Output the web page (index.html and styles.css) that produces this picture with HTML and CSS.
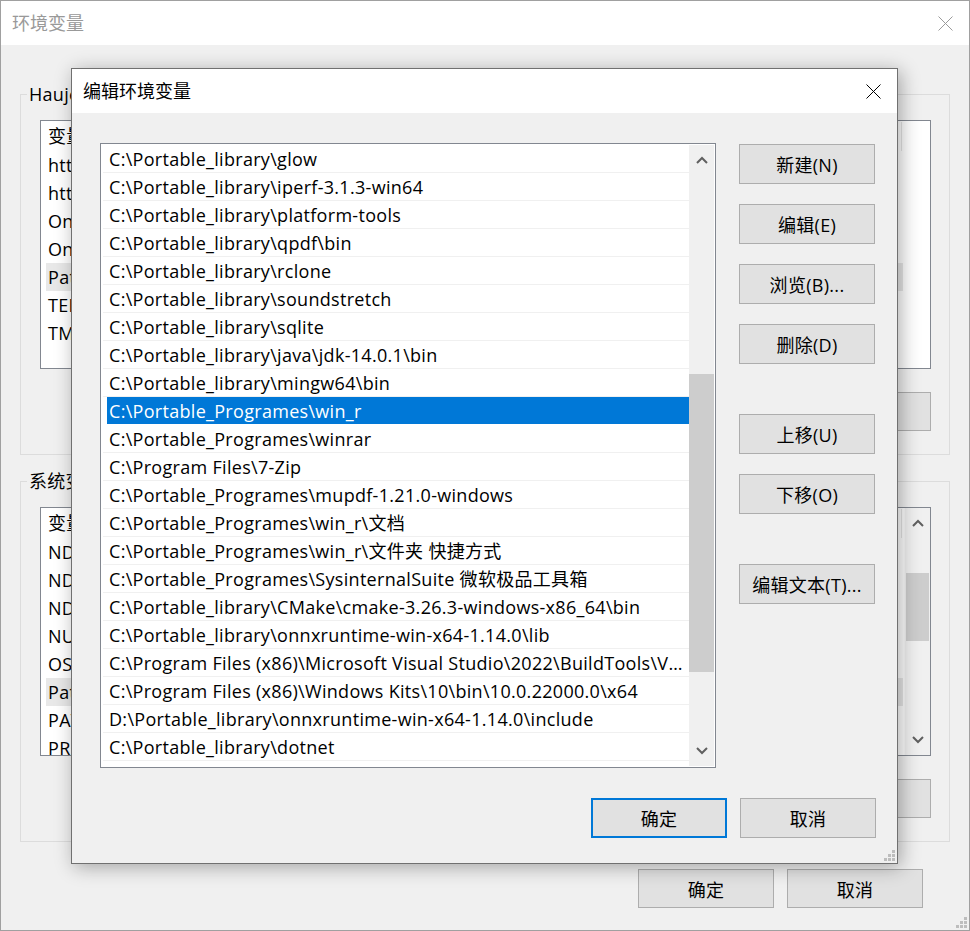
FILE: index.html
```html
<!DOCTYPE html>
<html lang="zh-CN">
<head>
    <meta charset="UTF-8">
    <title>环境变量</title>
    <link rel="stylesheet" href="styles.css">
</head>
<body>
    <div class="window">
        <div class="titlebar">
            <span class="title inactive">环境变量</span>
            <svg class="close-icon" width="15" height="15" viewBox="0 0 15 15"><path d="M0.5 0.5L14.5 14.5M14.5 0.5L0.5 14.5" stroke="#9a9a9a" stroke-width="1" fill="none"/></svg>
        </div>
        <div class="window-body">
            <fieldset class="group first">
                <legend>Haujet 的用户变量(U)</legend>
                <div class="listview">
                    <div class="lv-header">
                        <div class="lv-col name">变量</div>
                        <div class="lv-col value">值</div>
                    </div>
                    <div class="lv-row"><span class="name">http_proxy</span><span class="value">http://127.0.0.1:7890</span></div>
                    <div class="lv-row"><span class="name">https_proxy</span><span class="value">http://127.0.0.1:7890</span></div>
                    <div class="lv-row"><span class="name">OneDrive</span><span class="value">C:\Users\Haujet\OneDrive</span></div>
                    <div class="lv-row"><span class="name">OneDriveConsumer</span><span class="value">C:\Users\Haujet\OneDrive</span></div>
                    <div class="lv-row sel"><span class="name">Path</span><span class="value">C:\Portable_library\glow;C:\Portable_library\iperf-3.1.3-win64</span></div>
                    <div class="lv-row"><span class="name">TEMP</span><span class="value">%USERPROFILE%\AppData\Local\Temp</span></div>
                    <div class="lv-row"><span class="name">TMP</span><span class="value">%USERPROFILE%\AppData\Local\Temp</span></div>
                </div>
                <div class="group-buttons">
                    <button class="btn">新建(N)...</button>
                    <button class="btn">编辑(E)...</button>
                    <button class="btn">删除(D)</button>
                </div>
            </fieldset>

            <fieldset class="group second">
                <legend>系统变量(S)</legend>
                <div class="listview with-scroll">
                    <div class="lv-content">
                        <div class="lv-header">
                            <div class="lv-col name">变量</div>
                            <div class="lv-col value">值</div>
                        </div>
                        <div class="lv-row"><span class="name">NDK_HOME</span><span class="value">C:\Android\ndk</span></div>
                        <div class="lv-row"><span class="name">NDK_ROOT</span><span class="value">C:\Android\ndk</span></div>
                        <div class="lv-row"><span class="name">NDK_TOOLCHAIN</span><span class="value">C:\Android\ndk\toolchains</span></div>
                        <div class="lv-row"><span class="name">NUMBER_OF_PROCESSORS</span><span class="value">16</span></div>
                        <div class="lv-row"><span class="name">OS</span><span class="value">Windows_NT</span></div>
                        <div class="lv-row sel"><span class="name">Path</span><span class="value">C:\Windows\system32;C:\Windows</span></div>
                        <div class="lv-row"><span class="name">PATHEXT</span><span class="value">.COM;.EXE;.BAT;.CMD;.VBS;.VBE;.JS</span></div>
                        <div class="lv-row"><span class="name">PROCESSOR_ARCHITECTURE</span><span class="value">AMD64</span></div>
                    </div>
                    <div class="scrollbar small">
                        <div class="sb-btn"><svg width="12" height="8" viewBox="0 0 12 8"><polyline points="1,7 6,2 11,7" fill="none" stroke="#606060" stroke-width="2"/></svg></div>
                        <div class="sb-track"><div class="sb-thumb"></div></div>
                        <div class="sb-btn"><svg width="12" height="8" viewBox="0 0 12 8"><polyline points="1,1 6,6 11,1" fill="none" stroke="#606060" stroke-width="2"/></svg></div>
                    </div>
                </div>
                <div class="group-buttons">
                    <button class="btn">新建(W)...</button>
                    <button class="btn">编辑(I)...</button>
                    <button class="btn">删除(L)</button>
                </div>
            </fieldset>

            <div class="window-footer">
                <button class="btn">确定</button>
                <button class="btn">取消</button>
            </div>
        </div>
        <svg class="grip" width="12" height="12" viewBox="0 0 12 12"><g fill="#bdbdbd"><rect x="9" y="1" width="3" height="3"/><rect x="5" y="5" width="3" height="3"/><rect x="9" y="5" width="3" height="3"/><rect x="1" y="9" width="3" height="3"/><rect x="5" y="9" width="3" height="3"/><rect x="9" y="9" width="3" height="3"/></g></svg>
    </div>

    <div class="dialog">
        <div class="titlebar">
            <span class="title">编辑环境变量</span>
            <svg class="close-icon" width="15" height="15" viewBox="0 0 15 15"><path d="M0.5 0.5L14.5 14.5M14.5 0.5L0.5 14.5" stroke="#000" stroke-width="1" fill="none"/></svg>
        </div>
        <div class="dialog-body">
            <div class="dialog-main">
                <div class="pathlist">
                    <div class="pl-rows">
                        <div class="pl-row">C:\Portable_library\glow</div>
                        <div class="pl-row">C:\Portable_library\iperf-3.1.3-win64</div>
                        <div class="pl-row">C:\Portable_library\platform-tools</div>
                        <div class="pl-row">C:\Portable_library\qpdf\bin</div>
                        <div class="pl-row">C:\Portable_library\rclone</div>
                        <div class="pl-row">C:\Portable_library\soundstretch</div>
                        <div class="pl-row">C:\Portable_library\sqlite</div>
                        <div class="pl-row">C:\Portable_library\java\jdk-14.0.1\bin</div>
                        <div class="pl-row">C:\Portable_library\mingw64\bin</div>
                        <div class="pl-row sel">C:\Portable_Programes\win_r</div>
                        <div class="pl-row">C:\Portable_Programes\winrar</div>
                        <div class="pl-row">C:\Program Files\7-Zip</div>
                        <div class="pl-row">C:\Portable_Programes\mupdf-1.21.0-windows</div>
                        <div class="pl-row">C:\Portable_Programes\win_r\文档</div>
                        <div class="pl-row">C:\Portable_Programes\win_r\文件夹 快捷方式</div>
                        <div class="pl-row">C:\Portable_Programes\SysinternalSuite 微软极品工具箱</div>
                        <div class="pl-row">C:\Portable_library\CMake\cmake-3.26.3-windows-x86_64\bin</div>
                        <div class="pl-row">C:\Portable_library\onnxruntime-win-x64-1.14.0\lib</div>
                        <div class="pl-row">C:\Program Files (x86)\Microsoft Visual Studio\2022\BuildTools\VC\Tools\MSVC\14.35.32215\bin\Hostx64\x64</div>
                        <div class="pl-row">C:\Program Files (x86)\Windows Kits\10\bin\10.0.22000.0\x64</div>
                        <div class="pl-row">D:\Portable_library\onnxruntime-win-x64-1.14.0\include</div>
                        <div class="pl-row">C:\Portable_library\dotnet</div>
                    </div>
                    <div class="scrollbar">
                        <div class="sb-btn"><svg width="12" height="8" viewBox="0 0 12 8"><polyline points="1,7 6,2 11,7" fill="none" stroke="#606060" stroke-width="2"/></svg></div>
                        <div class="sb-track"><div class="sb-thumb"></div></div>
                        <div class="sb-btn"><svg width="12" height="8" viewBox="0 0 12 8"><polyline points="1,1 6,6 11,1" fill="none" stroke="#606060" stroke-width="2"/></svg></div>
                    </div>
                </div>
                <div class="side-buttons">
                    <button class="btn">新建(N)</button>
                    <button class="btn">编辑(E)</button>
                    <button class="btn">浏览(B)...</button>
                    <button class="btn">删除(D)</button>
                    <button class="btn spaced">上移(U)</button>
                    <button class="btn">下移(O)</button>
                    <button class="btn spaced">编辑文本(T)...</button>
                </div>
            </div>
            <div class="dialog-footer">
                <button class="btn default">确定</button>
                <button class="btn">取消</button>
            </div>
        </div>
        <svg class="grip" width="12" height="12" viewBox="0 0 12 12"><g fill="#bdbdbd"><rect x="9" y="1" width="3" height="3"/><rect x="5" y="5" width="3" height="3"/><rect x="9" y="5" width="3" height="3"/><rect x="1" y="9" width="3" height="3"/><rect x="5" y="9" width="3" height="3"/><rect x="9" y="9" width="3" height="3"/></g></svg>
    </div>
</body>
</html>
```

FILE: styles.css
```css
* {
    box-sizing: border-box;
}
body {
    margin: 0;
    font-family: "Open Sans", "Noto Sans CJK SC", sans-serif;
    font-size: 18px;
    letter-spacing: 0.3px;
    color: #000;
    background-color: #f0f0f0;
    overflow: hidden;
}
button {
    font: inherit;
    letter-spacing: inherit;
    color: #000;
}

/* window frame */
.window {
    position: relative;
    width: 970px;
    height: 931px;
    border: 1px solid #a0a0a0;
    background-color: #f0f0f0;
    display: flex;
    flex-direction: column;
}
.titlebar {
    flex: none;
    height: 44px;
    background-color: #fff;
    display: flex;
    align-items: center;
    justify-content: space-between;
    padding: 0 16px 0 11px;
}
.title {
    font-size: 18px;
    line-height: 24px;
    letter-spacing: 0;
}
.title.inactive {
    color: #999;
}
.close-icon {
    display: block;
}
.grip {
    position: absolute;
    right: 2px;
    bottom: 2px;
}

.window-body {
    flex: 1;
    padding: 0 19px;
}
.group {
    margin: 0;
    border: 1px solid #dcdcdc;
    padding: 14px 18px 23px 19px;
}
.group.first {
    margin-top: 37px;
}
.group.second {
    margin-top: 14px;
}
.group legend {
    padding: 0 2px;
    margin-left: -13px;
    line-height: 24px;
}
.group-buttons {
    display: flex;
    justify-content: flex-end;
    gap: 14px;
    margin-top: 23px;
}
.group-buttons .btn {
    height: 39px;
}

.btn {
    width: 136px;
    height: 40px;
    background-color: #e1e1e1;
    border: 1px solid #adadad;
    padding: 0;
    font-size: 18px;
}
.btn.default {
    border: 2px solid #0078d7;
}

/* variable lists */
.listview {
    height: 249px;
    background-color: #fff;
    border: 1px solid #828790;
    overflow: hidden;
}
.listview.with-scroll {
    display: flex;
}
.lv-content {
    flex: 1;
    overflow: hidden;
}
.lv-header {
    display: flex;
    height: 30px;
    padding-top: 1px;
}
.lv-col {
    line-height: 29px;
    padding-left: 7px;
    border-right: 1px solid #e5e5e5;
}
.lv-col.name {
    width: 250px;
    border-right-color: transparent;
}
.lv-col.value {
    width: 611px;
}
.lv-row {
    display: flex;
    width: 862px;
    height: 28px;
    line-height: 28px;
}
.lv-row.sel {
    background: linear-gradient(to right, transparent 5px, #e8e8e8 5px);
}
.lv-row .name {
    width: 250px;
    padding-left: 7px;
    white-space: nowrap;
    overflow: hidden;
}
.lv-row .value {
    width: 600px;
    padding-left: 7px;
    white-space: nowrap;
    overflow: hidden;
}

.scrollbar {
    flex: none;
    width: 25px;
    background-color: #f0f0f0;
    display: flex;
    flex-direction: column;
}
.scrollbar.small {
    width: 26px;
    border-left: 1px solid #fafafa;
}
.sb-btn {
    height: 30px;
    display: flex;
    align-items: center;
    justify-content: center;
}
.sb-track {
    flex: 1;
    padding: 0 1px;
}
.sb-thumb {
    background-color: #cdcdcd;
}
.scrollbar.small .sb-thumb {
    margin-top: 35px;
    height: 68px;
}

/* edit dialog */
.dialog {
    position: absolute;
    left: 71px;
    top: 68px;
    width: 827px;
    height: 796px;
    border: 1px solid #707070;
    background-color: #f0f0f0;
    box-shadow: 3px 3px 18px rgba(0, 0, 0, 0.32);
    display: flex;
    flex-direction: column;
}
.dialog-body {
    flex: 1;
    padding: 30px 21px 25px 28px;
    display: flex;
    flex-direction: column;
}
.dialog-main {
    display: flex;
    gap: 23px;
}
.pathlist {
    width: 616px;
    height: 625px;
    border: 1px solid #828790;
    background-color: #fff;
    padding: 1px;
    display: flex;
}
.pl-rows {
    flex: 1;
    padding-left: 1px;
    overflow: hidden;
}
.pl-row {
    height: 28px;
    padding-top: 1px;
    line-height: 26px;
    padding-left: 6px;
    padding-right: 6px;
    border-bottom: 1px solid #f0f0f0;
    white-space: nowrap;
    overflow: hidden;
    text-overflow: ellipsis;
}
.pl-row.sel {
    color: #fff;
    background: linear-gradient(to right, transparent 4px, #0078d7 4px);
    border-bottom-color: #fff;
}
.pathlist .sb-track {
    padding: 0;
}
.pathlist .sb-thumb {
    margin-top: 199px;
    height: 298px;
}
.side-buttons {
    display: flex;
    flex-direction: column;
    gap: 20px;
    padding-top: 1px;
}
.side-buttons .spaced {
    margin-top: 30px;
}
.dialog-footer {
    margin-top: 30px;
    display: flex;
    justify-content: flex-end;
    gap: 13px;
}
.window-footer {
    margin-top: 27px;
    padding-right: 27px;
    display: flex;
    justify-content: flex-end;
    gap: 13px;
}
.window-footer .btn {
    height: 39px;
}
```
